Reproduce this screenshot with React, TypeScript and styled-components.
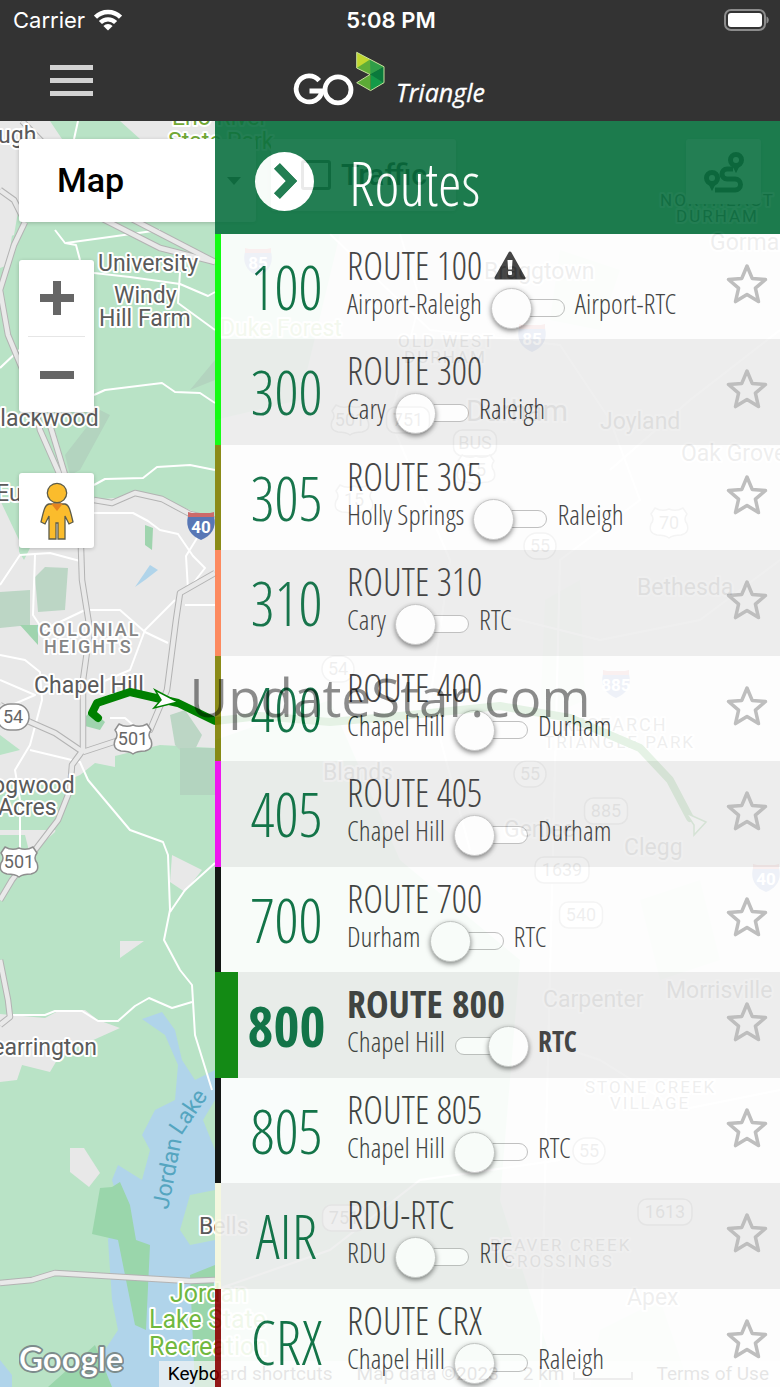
import React, { useState } from "react";
import styled, { createGlobalStyle } from "styled-components";

const condensedLight = '"Open Sans Condensed Light", "Open Sans", sans-serif';
const condensedBold = '"Open Sans Condensed", "Open Sans", sans-serif';

const GlobalStyle = createGlobalStyle`
  * { box-sizing: border-box; }
  body { margin: 0; background: #333; font-family: Roboto, sans-serif; }
  button { border: 0; padding: 0; background: none; font: inherit; color: inherit; cursor: pointer; }
`;

const Screen = styled.div`
  position: relative;
  display: flex;
  flex-direction: column;
  height: 100vh;
  overflow: hidden;
`;

/* ---------- top bar ---------- */

const TopBar = styled.header`
  flex: none;
  background: #333;
  color: #fff;
`;

const StatusBar = styled.div`
  display: grid;
  grid-template-columns: 1fr auto 1fr;
  align-items: center;
  height: 40px;
  padding: 0 11px 0 13px;
  font: 400 22px/40px Inter, sans-serif;
`;

const StatusLeft = styled.span`
  display: flex;
  align-items: center;
  gap: 9px;
`;

const Clock = styled.time`
  font-weight: 600;
`;

const StatusRight = styled.span`
  display: flex;
  justify-content: flex-end;
`;

const NavBar = styled.div`
  display: grid;
  grid-template-columns: 1fr auto 1fr;
  align-items: center;
  height: 81px;
  padding: 0 50px;
`;

const MenuButton = styled.button`
  display: flex;
  flex-direction: column;
  justify-self: start;
  gap: 8px;
  width: 43px;
`;

const MenuBar = styled.span`
  height: 5px;
  background: #d2d2d2;
`;

const Logo = styled.svg`
  display: block;
`;

/* ---------- map ---------- */

const Stage = styled.main`
  flex: 1;
  min-height: 0;
  display: grid;
  grid-template: minmax(0, 1fr) / 215px minmax(0, 1fr);
`;

const MapDrawing = styled.svg`
  grid-area: 1 / 1 / 2 / 3;
  width: 100%;
  height: 100%;
`;

const MapControls = styled.div`
  grid-area: 1 / 1 / 2 / 3;
  display: flex;
  flex-direction: column;
  align-items: flex-start;
  padding: 18px 0 0 19px;
  min-height: 0;
`;

const ControlRow = styled.div`
  display: flex;
  align-items: flex-start;
  gap: 15px;
  width: 100%;
  padding-right: 19px;
`;

const Panel = styled.div`
  background: #fff;
  border-radius: 3px;
  box-shadow: 0 1px 4px rgba(0, 0, 0, 0.2);
`;

const MapTypeButton = styled(Panel).attrs({ as: "button" })`
  display: flex;
  align-items: center;
  justify-content: space-between;
  width: 237px;
  height: 83px;
  padding: 0 15px 0 38px;
  background: #fff;
  color: #000;
  font: 500 34px/83px Roboto, sans-serif;
`;

const TrafficToggle = styled(Panel).attrs({ as: "label" })`
  display: flex;
  align-items: center;
  gap: 10px;
  width: 185px;
  height: 72px;
  padding-left: 30px;
  color: #000;
  font: 500 30px/70px Roboto, sans-serif;
`;

const TrafficBox = styled.input`
  appearance: none;
  width: 30px;
  height: 30px;
  margin: 0;
  border: 3px solid #333;
  border-radius: 3px;
`;

const PlannerButton = styled(Panel).attrs({ as: "button" })`
  display: flex;
  align-items: center;
  justify-content: center;
  width: 75px;
  height: 65px;
  margin-left: auto;
  background: #fff;
`;

const ZoomPanel = styled(Panel)`
  display: flex;
  flex-direction: column;
  width: 75px;
  margin-top: 38px;
  padding: 0 9px;
`;

const ZoomButton = styled.button`
  display: flex;
  align-items: center;
  justify-content: center;
  height: 76px;
  & + & {
    border-top: 1px solid #e6e6e6;
  }
`;

const PegmanButton = styled(Panel).attrs({ as: "button" })`
  display: flex;
  align-items: center;
  justify-content: center;
  width: 75px;
  height: 75px;
  margin-top: 61px;
  background: #fff;
`;

const MapFooter = styled.footer`
  display: flex;
  align-items: flex-end;
  justify-content: space-between;
  width: 100%;
  margin-top: auto;
`;

const Attribution = styled.div`
  display: flex;
  align-items: center;
  flex: 1;
  gap: 24px;
  height: 26px;
  margin-left: 35px;
  padding: 0 11px 0 9px;
  background: rgba(245, 245, 245, 0.7);
  color: #000;
  font: 400 19px/26px Roboto, sans-serif;
  white-space: nowrap;
`;

const ScaleBar = styled.span`
  display: inline-block;
  width: 60px;
  height: 8px;
  margin-left: 8px;
  border: 2px solid #555;
  border-top: 0;
`;

const FooterLink = styled.a`
  margin-left: auto;
  color: #000;
  text-decoration: none;
`;

/* ---------- drawer ---------- */

const Drawer = styled.section`
  grid-area: 1 / 2 / 2 / 3;
  z-index: 1;
  overflow: auto;
  scrollbar-width: none;
  opacity: 0.9;
`;

const DrawerHeader = styled.div`
  display: flex;
  align-items: center;
  gap: 35px;
  height: 113px;
  padding: 7px 0 0 40px;
  background: #0b7040;
  color: #fff;
`;

const CloseButton = styled.button`
  display: flex;
  align-items: center;
  justify-content: center;
  width: 59px;
  height: 59px;
  border-radius: 50%;
  background: #fff;
`;

const DrawerTitle = styled.h1`
  margin: 0;
  padding-top: 4px;
  font: 300 60px/72px ${condensedLight};
`;

const RouteList = styled.ul`
  margin: 0;
  padding: 0;
  list-style: none;
`;

const RouteRow = styled.li<{ $color: string; $active: boolean }>`
  display: grid;
  grid-template-columns: 132px 1fr 66px;
  height: 105px;
  background: linear-gradient(${(p) => p.$color}, ${(p) => p.$color}) left / ${(p) => (p.$active ? 23 : 6)}px 100% no-repeat #fff;
  color: #333;
  &:nth-child(even) {
    height: 106px;
    background-color: #eee;
  }
`;

const RouteNumber = styled.span<{ $active: boolean }>`
  display: flex;
  align-items: center;
  justify-content: center;
  padding-left: 11px;
  color: #00683a;
  font: 300 60px/72px ${condensedLight};
  ${(p) => p.$active && `font: 700 56px/72px ${condensedBold};`}
`;

const RouteInfo = styled.div`
  padding-top: 13px;
  white-space: nowrap;
`;

const RouteName = styled.h2<{ $active: boolean }>`
  display: flex;
  align-items: center;
  gap: 12px;
  margin: 0;
  font: 300 38px/36px ${condensedLight};
  ${(p) => p.$active && `font: 700 38px/36px ${condensedBold};`}
`;

const DirectionLabel = styled.label`
  display: flex;
  align-items: center;
  gap: 10px;
  width: max-content;
  height: 40px;
  font: 300 28px/40px ${condensedLight};
`;

const Destination = styled.span<{ $bold: boolean }>`
  ${(p) => p.$bold && `font: 700 28px/40px ${condensedBold};`}
`;

const Switch = styled.input`
  appearance: none;
  display: flex;
  align-items: center;
  width: 73px;
  height: 18px;
  margin: 10px 0 0;
  border: 1px solid #bbb;
  border-radius: 9px;
  background: #fff;
  &::after {
    content: "";
    flex: none;
    width: 39px;
    height: 39px;
    margin: 0 -2px;
    border: 1px solid #c4c4c4;
    border-radius: 50%;
    background: #fff;
    box-shadow: 0 2px 5px rgba(0, 0, 0, 0.5);
  }
  &:checked {
    justify-content: flex-end;
  }
`;

const StarButton = styled.button`
  display: flex;
  align-items: center;
  justify-content: center;
  height: 100px;
`;

const Watermark = styled.div`
  position: absolute;
  z-index: 2;
  top: 660px;
  left: 0;
  width: 100%;
  color: rgba(0, 0, 0, 0.45);
  font: 400 53px/74px "Open Sans", sans-serif;
  text-align: center;
  pointer-events: none;
`;

/* ---------- icons ---------- */

const WifiIcon = () => (
  <svg width="28" height="22" viewBox="0 0 28 22" fill="none" stroke="#fff" strokeWidth="4.400">
    <path d="M1.500 8.200a17.500 17.500 0 0 1 25 0" />
    <path d="M6.400 13.500a10.700 10.700 0 0 1 15.200 0" />
    <path d="M14 21.500l-4.600-4.600a6.500 6.500 0 0 1 9.200 0z" fill="#fff" stroke="none" />
  </svg>
);

const BatteryIcon = () => (
  <svg width="46" height="22" viewBox="0 0 46 22">
    <rect x="2" y="1" width="40" height="20" rx="6" fill="none" stroke="#8c8c8c" strokeWidth="2" />
    <rect x="5" y="4" width="34" height="14" rx="3" fill="#fff" />
    <path d="M43.500 7.500c3 1 3 6 0 7z" fill="#8c8c8c" />
  </svg>
);

const GoTriangleLogo = () => (
  <Logo width="194" height="60" viewBox="293 51 194 60" role="img" aria-label="GO Triangle">
    <g fill="none" stroke="#fff" strokeWidth="4.800">
      <path d="M319.200 80.600A13 13 0 1 0 322 91H309.500" />
      <circle cx="338" cy="89.800" r="13" />
    </g>
    <path d="M356.700 52.300L370 59.500V66L356.700 68z" fill="#c0d72f" />
    <path d="M370 59.500L384 66.700L370 74.500L356.700 68z" fill="#5fae38" />
    <path d="M370 59.500L384 66.700L370.500 74.500z" fill="#2f9e48" />
    <path d="M384 66.700V82.700L370 74.500z" fill="#0a7a3c" />
    <path d="M384 82.700L370.600 90.600V74.500z" fill="#149a48" />
    <path d="M370.600 90.600L356.700 82.700L370.600 74.500z" fill="#5cab36" />
    <path d="M356.700 52.300L384 66.700V82.700L370.600 90.600L356.700 82.700L370 74.500L356.700 68z" fill="none" stroke="#c9e29c" strokeWidth="1" />
    <text x="396" y="102" fill="#fff" stroke="#fff" strokeWidth="0.300" fontFamily="Open Sans, sans-serif" fontStyle="italic" fontSize="25">Triangle</text>
  </Logo>
);

const ChevronIcon = () => (
  <svg width="26" height="40" viewBox="-2 0 26 40" fill="none" stroke="#0b7040" strokeWidth="8">
    <path d="M3 5l14.500 15L3 35" />
    <path d="M3 5l14.500 15L3 35" strokeWidth="8" strokeLinejoin="miter" />
  </svg>
);

const WarningIcon = () => (
  <svg width="32" height="29" viewBox="0 0 32 29" role="img" aria-label="Alert">
    <path d="M16 2L30 27H2z" fill="#333" stroke="#333" strokeWidth="3" strokeLinejoin="round" />
    <path d="M13.500 9h5l-.600 9.500h-3.800z" fill="#fff" />
    <rect x="14" y="20" width="4" height="4" rx="1" fill="#fff" />
  </svg>
);

const StarIcon = () => (
  <svg width="44" height="44" viewBox="0 0 44 44" fill="none" stroke="#b9b9b9" strokeWidth="3.500" strokeLinejoin="round">
    <path d="M22 4L27.200 16.400L40.500 17.500L30.400 26.200L33.500 39.600L22 32.600L10.500 39.600L13.600 26.200L3.500 17.500L16.800 16.400z" />
  </svg>
);

const PlannerIcon = () => (
  <svg width="42" height="42" viewBox="0 0 42 42" fill="none" stroke="#222" strokeWidth="5">
    <circle cx="33" cy="9" r="5.500" />
    <path d="M30 14l3 6 3-6zM6 32l3 6 3-6z" fill="#222" strokeWidth="2" />
    <circle cx="9" cy="27" r="5.500" />
    <path d="M12 39H32a5.500 5.500 0 0 0 0-11H24a5 5 0 0 1 0-10h6" />
  </svg>
);

const PegmanIcon = () => (
  <svg width="34" height="58" viewBox="0 0 34 58" fill="#fbbc2c" stroke="#5c5c4a" strokeWidth="1.300">
    <path d="M9 22H25C29 23 30 27 33 40L29 42L25 34V57H18V41H16V57H9V34L5 42L1 40C4 27 5 23 9 22z" />
    <path d="M11 21.500H23L17 29z" fill="#e5831f" stroke="none" />
    <circle cx="17" cy="11" r="9.700" />
  </svg>
);

const GoogleMark = () => (
  <svg width="111" height="50" viewBox="0 0 111 50" role="img" aria-label="Google">
    <text x="0" y="35" fill="#fff" stroke="#7d8c8c" strokeWidth="4" paintOrder="stroke" strokeLinejoin="round" fontFamily="Lato, sans-serif" fontWeight="600" fontSize="35">
      Google
    </text>
  </svg>
);

/* ---------- map drawing ---------- */

type LabelProps = { x: number; y: number; children: string; size?: number; fill?: string; spacing?: number; weight?: number };

const MapLabel = ({ x, y, children, size = 23, fill = "#5a5a5a", spacing = 0, weight = 400 }: LabelProps) => (
  <text x={x} y={y} fontSize={size} fill={fill} letterSpacing={spacing} fontWeight={weight} stroke="#fff" strokeWidth="4" strokeLinejoin="round" paintOrder="stroke">
    {children}
  </text>
);

const Shield = ({ x, y, n }: { x: number; y: number; n: string }) => {
  const w = n.length * 11 + 10;
  return (
    <g>
      <rect x={x - w / 2} y={y - 13} width={w} height="26" rx={n.length > 2 ? 9 : 13} fill="#fff" stroke="#8f8f8f" strokeWidth="1.500" />
      <text x={x} y={y + 6} textAnchor="middle" fontSize="18" fill="#666">{n}</text>
    </g>
  );
};

const UsShield = ({ x, y, n }: { x: number; y: number; n: string }) => (
  <g>
    <path
      transform={`translate(${x} ${y})`}
      d="M-14-15Q-7-11 0-14Q7-11 14-15L18-9Q14-4 18 1Q21 10 12 12Q4 12 0 15Q-4 12-12 12Q-21 10-18 1Q-14-4-18-9z"
      fill="#fff"
      stroke="#8f8f8f"
      strokeWidth="1.500"
      strokeLinejoin="round"
    />
    <text x={x} y={y + 6} textAnchor="middle" fontSize="18" fill="#666">{n}</text>
  </g>
);

const Interstate = ({ x, y, n }: { x: number; y: number; n: string }) => (
  <g>
    <path d={`M${x - 13} ${y - 10}h26c3 12-3 20-13 24c-10-4-16-12-13-24z`} fill="#5877b5" />
    <path d={`M${x - 13} ${y - 14}l4 1h18l4-1v5h-26z`} fill="#cc6a6a" />
    <text x={x} y={y + 7} textAnchor="middle" fontSize="17" fontWeight="700" fill="#fff">{n}</text>
  </g>
);

const highways = [
  "M22 121L50 150L105 205L215 262",
  "M95 215L160 248L215 262",
  "M25 222L14 245L0 290L8 335L33 395L40 430L62 480L75 520",
  "M50 425L66 478",
  "M0 190L14 200L25 222",
  "M94 500L112 503L135 493L162 499L190 514L215 520",
  "M81 548L82 580L90 630L83 680L83 750L72 765L70 790L58 820L35 850L12 880L0 900",
  "M215 573L180 593L176 620L167 690L150 730L83 752",
  "M0 705L30 722L55 733L83 752",
  "M0 960L8 1000L10 1017L0 1025",
  "M0 1283L32 1280L55 1273L190 1281L215 1280",
];

const streets = [
  "M78 121L74 139", "M160 230L66 243", "M55 230L65 243L76 245L80 260",
  "M94 273L130 277L180 284L208 296L215 292", "M180 272L178 303L215 330",
  "M0 368L19 350", "M94 395L105 390L162 383L175 392L200 393L215 403",
  "M94 485L105 479L143 478L157 467L190 465L215 470",
  "M94 513L133 513L148 521L160 530L178 534L193 556L205 568L188 590L186 556L205 525",
  "M0 585L20 555L50 553L80 561", "M0 655L25 660L40 672L42 700L30 745L15 770L20 800V850",
  "M35 555L33 615L43 630L85 610H120L145 632L168 643", "M175 600L145 630L130 670L95 685",
  "M30 750L80 762L88 780L130 830L163 842L168 855L170 910L164 940L180 970L192 985L195 1035L212 1090",
  "M215 863L185 890L170 912",
  "M12 1015H45L55 1011H82L98 1021H118L135 1006L149 998L172 1008L192 1002",
  "M215 605H185", "M110 718H125L133 725", "M0 680L35 695L0 710",
  "M330 234L430 330L560 345L610 420L640 500L560 560L540 1387",
  "M780 330L690 400L610 470",
  "M400 234L420 300L390 420L450 560L430 700L470 850", "M780 560L700 620L600 640L480 610",
  "M780 1090L680 1110L600 1060L540 1040", "M215 1290L330 1250L420 1180L560 1160",
];

const MapArt = () => (
  <MapDrawing viewBox="0 121 780 1266" preserveAspectRatio="xMinYMin slice" fontFamily="Roboto, sans-serif">
    <rect y="121" width="780" height="1266" fill="#b9e3c6" />
    <g fill="#e8e8e8">
      <path d="M0 121H50L62 139L30 150L20 200L14 235L0 240z" />
      <path d="M0 205L12 235L8 265L0 268z" />
      <path d="M120 121H215V139H140z" />
      <path d="M0 500L19 540V560L0 565z" />
      <path d="M30 548L94 500L135 496L165 500L215 520V748L160 745L115 756V767L95 763L80 775L68 780L55 832L30 855L25 835H0V755L20 750L0 735V520L24 560z" />
      <path d="M0 1014L45 1018L60 1010H85L98 1020L120 1028L60 1055L50 1072L22 1065L17 1080L0 1082z" />
      <path d="M120 941H144L120 958z" />
      <path d="M70 1148L84 1148L100 1173L89 1187L70 1172z" />
      <path d="M172 855L202 870L185 892L170 882z" />
      <path d="M340 234H780V1387H560L500 1200L520 960L400 860L330 700L215 740V420L300 400z" />
    </g>
    <path d="M60 830H0V785H50L68 780z" fill="#b9e3c6" />
    <path d="M560 250L620 270L600 330L550 320zM640 900L700 880L720 960L660 980zM545 600L580 580L585 700L540 720zM600 1330L660 1300L690 1387H590z" fill="#d3e6d9" />
    <path d="M35 577L45 567L68 568L65 610L38 612zM0 592L30 590V625L0 628zM170 715L185 710L202 735L190 760L175 745z" fill="#bcd6c5" />
    <path d="M190 390L215 360V380zM65 455L100 410L110 415L80 470L70 475zM180 748H215V795H180z" fill="#b3d4bf" />
    <path d="M145 525L153 528L152 550L145 545zM20 625H38V645zM82 720L92 710L105 722L100 730L85 726z" fill="#9fd4ae" />
    <g fill="#b0d4ea">
      <path d="M135 587L150 565L158 570L145 580z" />
      <path d="M142 1019L162 1012L175 1030L182 1060L195 1080L215 1070V1100L203 1120L215 1150V1190L190 1195L180 1230L190 1245L215 1240V1387H100L92 1370L118 1330L112 1300L108 1240L118 1200L112 1180L118 1165L142 1180L150 1150L142 1135L155 1110L175 1100L178 1065L165 1035z" />
      <path d="M0 1360L12 1375V1387H0z" />
    </g>
    <g fill="#9ad6ab">
      <path d="M100 1188L112 1187L120 1182L130 1205L136 1240L150 1245L146 1330L135 1325L118 1240L92 1234z" />
      <path d="M190 1275L215 1265V1387H195zM48 1387L95 1345L112 1387z" />
    </g>
    <path d="M215 1060H300V1280H215z" fill="#c3e3d6" />
    <g fill="none" strokeLinejoin="round">
      <g stroke="#fff" strokeWidth="2">
        {streets.map((d) => <path key={d} d={d} />)}
      </g>
      <g stroke="#b3b3b3" strokeWidth="6.500">
        {highways.map((d) => <path key={d} d={d} />)}
      </g>
      <g stroke="#e9e9e9" strokeWidth="4.500">
        {highways.map((d) => <path key={d} d={d} />)}
      </g>
    </g>

    <MapLabel x={-15} y={143}>ough</MapLabel>
    <MapLabel x={172} y={125} fill="#71a835">Eno River</MapLabel>
    <MapLabel x={168} y={149} fill="#71a835">State Park</MapLabel>
    <MapLabel x={98} y={271}>University</MapLabel>
    <MapLabel x={114} y={303}>Windy</MapLabel>
    <MapLabel x={99} y={326}>Hill Farm</MapLabel>
    <MapLabel x={-14} y={426}>Blackwood</MapLabel>
    <MapLabel x={-4} y={501}>Eubanks</MapLabel>
    <Interstate x={201} y={526} n="40" />
    <MapLabel x={39} y={636} size={18} spacing={2} fill="#858585" weight={500}>COLONIAL</MapLabel>
    <MapLabel x={44} y={653} size={18} spacing={2} fill="#858585" weight={500}>HEIGHTS</MapLabel>
    <MapLabel x={34} y={693}>Chapel Hill</MapLabel>
    <Shield x={13} y={717} n="54" />
    <UsShield x={133} y={739} n="501" />
    <MapLabel x={-23} y={793}>Dogwood</MapLabel>
    <MapLabel x={-2} y={815}>Acres</MapLabel>
    <UsShield x={19} y={862} n="501" />
    <MapLabel x={-22} y={1055}>Pearrington</MapLabel>
    <g transform="translate(168 1210) rotate(-79)">
      <text fontSize="23" fill="#55a5c0">Jordan</text>
    </g>
    <g transform="translate(181 1136) rotate(-56)">
      <text fontSize="23" fill="#55a5c0">Lake</text>
    </g>
    <MapLabel x={199} y={1234}>Bells</MapLabel>
    <MapLabel x={170} y={1302} size={25} fill="#71b83f">Jordan</MapLabel>
    <MapLabel x={149} y={1328} size={25} fill="#71b83f">Lake State</MapLabel>
    <MapLabel x={149} y={1355} size={25} fill="#71b83f">Recreation</MapLabel>

    <MapLabel x={660} y={206} size={17} spacing={2}>NORTHEAST</MapLabel>
    <MapLabel x={676} y={222} size={17} spacing={2}>DURHAM</MapLabel>
    <MapLabel x={710} y={250}>Gorman</MapLabel>
    <MapLabel x={484} y={279}>Braggtown</MapLabel>
    <MapLabel x={220} y={336} fill="#8fbf5a">Duke Forest</MapLabel>
    <Interstate x={258} y={262} n="85" />
    <Interstate x={532} y={338} n="85" />
    <MapLabel x={398} y={347} size={17} spacing={2}>OLD WEST</MapLabel>
    <MapLabel x={404} y={363} size={17} spacing={2}>DURHAM</MapLabel>
    <MapLabel x={466} y={421} size={29}>Durham</MapLabel>
    <MapLabel x={600} y={429}>Joyland</MapLabel>
    <UsShield x={350} y={420} n="501" />
    <Shield x={408} y={420} n="751" />
    <Shield x={475} y={443} n="BUS" />
    <UsShield x={476} y={470} n="15" />
    <UsShield x={354} y={500} n="15" />
    <MapLabel x={681} y={461}>Oak Grove</MapLabel>
    <UsShield x={669} y={523} n="70" />
    <Shield x={540} y={546} n="55" />
    <MapLabel x={637} y={595}>Bethesda</MapLabel>
    <Shield x={338} y={669} n="54" />
    <Interstate x={616} y={684} n="885" />
    <MapLabel x={562} y={731} size={18} spacing={2}>RESEARCH</MapLabel>
    <MapLabel x={544} y={748} size={17} spacing={2}>TRIANGLE PARK</MapLabel>
    <MapLabel x={323} y={780}>Blands</MapLabel>
    <Shield x={530} y={774} n="55" />
    <Shield x={606} y={811} n="885" />
    <MapLabel x={504} y={837}>Genlee</MapLabel>
    <MapLabel x={624} y={855}>Clegg</MapLabel>
    <Shield x={562} y={870} n="1639" />
    <Interstate x={766} y={878} n="40" />
    <Shield x={581} y={915} n="540" />
    <MapLabel x={543} y={1007}>Carpenter</MapLabel>
    <MapLabel x={666} y={998}>Morrisville</MapLabel>
    <MapLabel x={585} y={1093} size={17} spacing={2}>STONE CREEK</MapLabel>
    <MapLabel x={610} y={1109} size={17} spacing={2}>VILLAGE</MapLabel>
    <Shield x={589} y={1151} n="55" />
    <Shield x={344} y={1218} n="751" />
    <Shield x={665} y={1212} n="1613" />
    <MapLabel x={490} y={1251} size={17} spacing={2}>BEAVER CREEK</MapLabel>
    <MapLabel x={504} y={1267} size={17} spacing={2}>CROSSINGS</MapLabel>
    <MapLabel x={627} y={1305}>Apex</MapLabel>

    <path d="M98 718L92 713L97 703L130 692L178 703L215 721L260 716L330 722L400 716L500 706L570 718L640 748L670 780L690 818" fill="none" stroke="#008000" strokeWidth="8" strokeLinejoin="round" strokeLinecap="round" />
    <path d="M155 690L178 702L154 708L161 700zM686 813L706 822L694 835L694 825z" fill="#fff" stroke="#008000" strokeWidth="1.500" />
  </MapDrawing>
);

/* ---------- data and page ---------- */

type Route = { id: string; name: string; from: string; to: string; color: string; active?: boolean; alert?: boolean };

const routes: Route[] = [
  { id: "100", name: "ROUTE 100", from: "Airport-Raleigh", to: "Airport-RTC", color: "#00ff00", alert: true },
  { id: "300", name: "ROUTE 300", from: "Cary", to: "Raleigh", color: "#00ff00" },
  { id: "305", name: "ROUTE 305", from: "Holly Springs", to: "Raleigh", color: "#808000" },
  { id: "310", name: "ROUTE 310", from: "Cary", to: "RTC", color: "#ff7f50" },
  { id: "400", name: "ROUTE 400", from: "Chapel Hill", to: "Durham", color: "#808000" },
  { id: "405", name: "ROUTE 405", from: "Chapel Hill", to: "Durham", color: "#f400f4" },
  { id: "700", name: "ROUTE 700", from: "Durham", to: "RTC", color: "#000000" },
  { id: "800", name: "ROUTE 800", from: "Chapel Hill", to: "RTC", color: "#008000", active: true },
  { id: "805", name: "ROUTE 805", from: "Chapel Hill", to: "RTC", color: "#000000" },
  { id: "AIR", name: "RDU-RTC", from: "RDU", to: "RTC", color: "#fafae0" },
  { id: "CRX", name: "ROUTE CRX", from: "Chapel Hill", to: "Raleigh", color: "#8b0000" },
];

const RouteItem = ({ route }: { route: Route }) => {
  const active = Boolean(route.active);
  const [reverse, setReverse] = useState(active);
  return (
    <RouteRow $color={route.color} $active={active}>
      <RouteNumber $active={active}>{route.id}</RouteNumber>
      <RouteInfo>
        <RouteName $active={active}>
          {route.name}
          {route.alert && <WarningIcon />}
        </RouteName>
        <DirectionLabel>
          <Destination $bold={active && !reverse}>{route.from}</Destination>
          <Switch type="checkbox" role="switch" checked={reverse} onChange={(e) => setReverse(e.target.checked)} />
          <Destination $bold={active && reverse}>{route.to}</Destination>
        </DirectionLabel>
      </RouteInfo>
      <StarButton aria-label={`Favorite ${route.name}`}>
        <StarIcon />
      </StarButton>
    </RouteRow>
  );
};

export default function App() {
  return (
    <Screen>
      <GlobalStyle />
      <TopBar>
        <StatusBar>
          <StatusLeft>Carrier <WifiIcon /></StatusLeft>
          <Clock>5:08 PM</Clock>
          <StatusRight><BatteryIcon /></StatusRight>
        </StatusBar>
        <NavBar>
          <MenuButton aria-label="Menu">
            <MenuBar />
            <MenuBar />
            <MenuBar />
          </MenuButton>
          <GoTriangleLogo />
        </NavBar>
      </TopBar>
      <Stage>
        <MapArt />
        <MapControls>
          <ControlRow>
            <MapTypeButton>
              Map
              <svg width="14" height="8" viewBox="0 0 14 8"><path d="M0 0h14l-7 8z" fill="#333" /></svg>
            </MapTypeButton>
            <TrafficToggle>
              <TrafficBox type="checkbox" />
              Traffic
            </TrafficToggle>
            <PlannerButton aria-label="Trip planner"><PlannerIcon /></PlannerButton>
          </ControlRow>
          <ZoomPanel>
            <ZoomButton aria-label="Zoom in">
              <svg width="34" height="34" viewBox="0 0 34 34"><path d="M13 0h8v13h13v8H21v13h-8V21H0v-8h13z" fill="#666" /></svg>
            </ZoomButton>
            <ZoomButton aria-label="Zoom out">
              <svg width="34" height="8" viewBox="0 0 34 8"><path d="M0 0h34v8H0z" fill="#666" /></svg>
            </ZoomButton>
          </ZoomPanel>
          <PegmanButton aria-label="Street View"><PegmanIcon /></PegmanButton>
          <MapFooter>
            <GoogleMark />
            <Attribution>
              <span>Keyboard shortcuts</span>
              <span>Map data ©2023</span>
              <span>2 km<ScaleBar /></span>
              <FooterLink href="#terms">Terms of Use</FooterLink>
            </Attribution>
          </MapFooter>
        </MapControls>
        <Drawer>
          <DrawerHeader>
            <CloseButton aria-label="Close routes"><ChevronIcon /></CloseButton>
            <DrawerTitle>Routes</DrawerTitle>
          </DrawerHeader>
          <RouteList>
            {routes.map((route) => <RouteItem key={route.id} route={route} />)}
          </RouteList>
        </Drawer>
      </Stage>
      <Watermark>UpdateStar.com</Watermark>
    </Screen>
  );
}
